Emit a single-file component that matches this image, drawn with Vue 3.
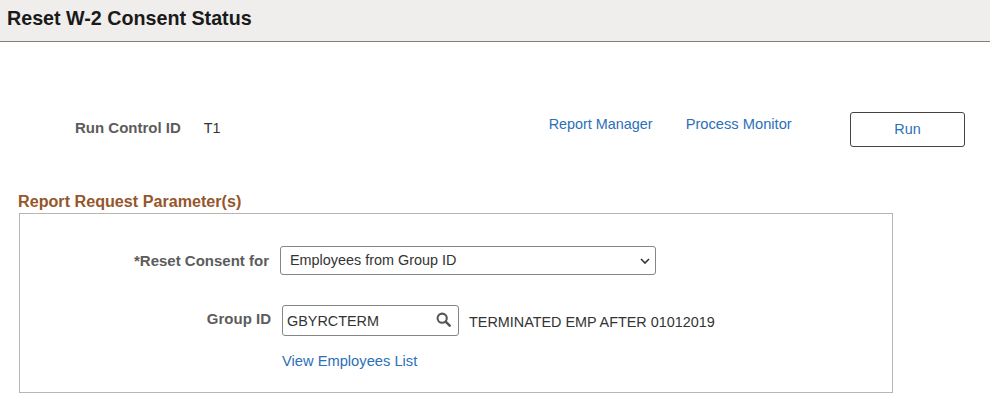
<template>
  <div class="page">
    <div class="header">
      <h1>Reset W-2 Consent Status</h1>
    </div>

    <div class="run-row">
      <span class="label run-label">Run Control ID</span>
      <span class="run-value">T1</span>
      <a class="link manager-link" href="#">Report Manager</a>
      <a class="link monitor-link" href="#">Process Monitor</a>
      <button type="button" class="run-btn">Run</button>
    </div>

    <h2 class="section-title">Report Request Parameter(s)</h2>
    <div class="params">
      <div class="consent-row">
        <label class="label consent-label" for="consent">*Reset Consent for</label>
        <div class="select-wrap">
          <select id="consent" class="consent-select" v-model="consentFor">
            <option v-for="opt in consentOptions" :key="opt" :value="opt">{{ opt }}</option>
          </select>
          <svg class="chevron" viewBox="0 0 10 6" width="10" height="6" aria-hidden="true">
            <polyline points="1,1 5,5 9,1" fill="none" stroke="#333" stroke-width="1.6" />
          </svg>
        </div>
      </div>
      <div class="group-row">
        <label class="label group-label" for="groupId">Group ID</label>
        <div class="group-input">
          <input id="groupId" type="text" v-model="groupId" />
          <svg class="search-icon" viewBox="0 0 16 16" width="15" height="15" aria-hidden="true">
            <circle cx="6.6" cy="6.6" r="4.9" fill="none" stroke="#555" stroke-width="2.2" />
            <line x1="10.3" y1="10.3" x2="14.6" y2="14.6" stroke="#555" stroke-width="2.6" stroke-linecap="round" />
          </svg>
        </div>
        <span class="group-desc">TERMINATED EMP AFTER 01012019</span>
      </div>
      <a class="link employees-link" href="#">View Employees List</a>
    </div>
  </div>
</template>

<script setup>
import { ref } from 'vue';

const consentOptions = ['Employees from Group ID', 'All Employees'];
const consentFor = ref('Employees from Group ID');
const groupId = ref('GBYRCTERM');
</script>

<style>
html, body {
  background: #fff;
}
</style>

<style scoped>
.page {
  width: 990px;
  height: 404px;
  overflow: hidden;
  font-family: "Liberation Sans", Arial, sans-serif;
  font-size: 14.4px;
  color: #333;
}

.header {
  height: 41px;
  background-color: #efeeed;
  border-bottom: 1px solid #7f7f7f;
  display: flex;
  align-items: center;
  padding-left: 7px;
}

.header h1 {
  margin: 0 0 4px;
  font-size: 19.7px;
  font-weight: bold;
  color: #1a1a1a;
}

.run-row {
  display: flex;
  align-items: flex-start;
  margin-top: 70px;
  height: 35px;
  padding-left: 75px;
}

.label {
  font-weight: bold;
  font-size: 15px;
  color: #5c5c5c;
}

.run-label {
  margin-top: 7px;
}

.run-value {
  margin-top: 8px;
  margin-left: 23px;
  color: #333;
}

.link {
  color: #2c70b7;
  text-decoration: none;
}

.manager-link {
  margin-top: 4px;
  margin-left: 328px;
}

.monitor-link {
  margin-top: 4px;
  margin-left: 33px;
  font-size: 14.7px;
}

.run-btn {
  margin-left: auto;
  margin-right: 25px;
  width: 115px;
  height: 35px;
  padding-bottom: 3px;
  background: #fff;
  border: 1px solid #444;
  border-radius: 3px;
  color: #2c70b7;
  font-family: inherit;
  font-size: 14.4px;
}

.section-title {
  margin: 46px 0 0 18px;
  font-size: 16.15px;
  line-height: 17px;
  font-weight: bold;
  color: #96562b;
}

.params {
  margin: 3px 0 0 19px;
  width: 872px;
  height: 178px;
  border: 1px solid #b9b6b0;
}

.consent-row {
  display: flex;
  align-items: center;
  margin-top: 32px;
  height: 29px;
}

.consent-label {
  width: 249px;
  margin-top: 0;
  text-align: right;
}

.select-wrap {
  position: relative;
  margin-left: 11px;
  width: 376px;
  height: 29px;
}

.consent-select {
  appearance: none;
  width: 100%;
  height: 100%;
  padding: 0 24px 2px 9px;
  background: #fff;
  border: 1px solid #858585;
  border-radius: 3px;
  font-family: inherit;
  font-size: 14.4px;
  color: #333;
}

.chevron {
  position: absolute;
  right: 6px;
  top: 12px;
  pointer-events: none;
}

.group-row {
  display: flex;
  align-items: center;
  margin-top: 30px;
  height: 31px;
}

.group-label {
  width: 251px;
  margin-top: -4px;
  text-align: right;
}

.group-input {
  position: relative;
  margin-left: 11px;
  width: 177px;
  height: 31px;
}

.group-input input {
  width: 100%;
  height: 100%;
  box-sizing: border-box;
  padding: 0 26px 0 4px;
  border: 1px solid #858585;
  border-radius: 3px;
  font-family: inherit;
  font-size: 14.4px;
  color: #333;
}

.search-icon {
  position: absolute;
  right: 8px;
  top: 7px;
}

.group-desc {
  margin-left: 10px;
  margin-top: 3px;
  color: #333;
}

.employees-link {
  display: block;
  margin: 17px 0 0 262px;
  font-size: 14.7px;
}
</style>
